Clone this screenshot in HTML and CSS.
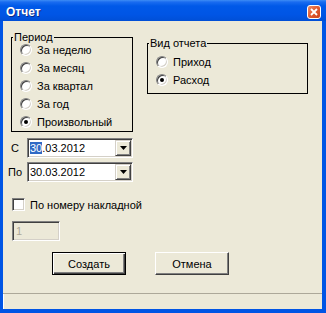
FILE: index.html
```html
<!DOCTYPE html>
<html lang="ru">
<head>
  <meta charset="UTF-8">
  <title>Отчет</title>
  <link rel="stylesheet" href="styles.css">
</head>
<body>
  <div class="window">
    <div class="titlebar">
      <span class="title">Отчет</span>
      <span class="close">
        <svg width="14" height="14" viewBox="0 0 14 14">
          <defs>
            <linearGradient id="red" x1="0" y1="0" x2="1" y2="1">
              <stop offset="0" stop-color="#f0906a"/>
              <stop offset="0.5" stop-color="#e05a30"/>
              <stop offset="1" stop-color="#c8401a"/>
            </linearGradient>
          </defs>
          <rect x="0.5" y="0.5" width="13" height="13" rx="2.5" fill="url(#red)" stroke="#fff"/>
          <path d="M4 4l6 6M10 4l-6 6" stroke="#fff" stroke-width="1.8"/>
        </svg>
      </span>
    </div>

    <div class="client">
      <div class="content">
        <div class="top">
          <fieldset class="group period">
            <legend>Период</legend>
            <label class="opt"><span class="radio"></span>За неделю</label>
            <label class="opt"><span class="radio"></span>За месяц</label>
            <label class="opt"><span class="radio"></span>За квартал</label>
            <label class="opt"><span class="radio"></span>За год</label>
            <label class="opt"><span class="radio on"></span>Произвольный</label>
          </fieldset>

          <fieldset class="group kind">
            <legend>Вид отчета</legend>
            <label class="opt"><span class="radio"></span>Приход</label>
            <label class="opt"><span class="radio on"></span>Расход</label>
          </fieldset>
        </div>

        <div class="dates">
          <div class="date-row">
            <span class="lbl">С</span>
            <div class="combo">
              <span class="value"><span class="sel">30</span>.03.2012</span>
              <span class="drop"><svg width="7" height="4" viewBox="0 0 7 4"><path d="M0 0h7L3.5 4z"/></svg></span>
            </div>
          </div>
          <div class="date-row">
            <span class="lbl">По</span>
            <div class="combo">
              <span class="value">30.03.2012</span>
              <span class="drop"><svg width="7" height="4" viewBox="0 0 7 4"><path d="M0 0h7L3.5 4z"/></svg></span>
            </div>
          </div>
        </div>

        <label class="check-row"><span class="check"></span>По номеру накладной</label>

        <div class="num">1</div>

        <div class="buttons">
          <button class="btn default">Создать</button>
          <button class="btn">Отмена</button>
        </div>
      </div>

      <div class="statusbar"></div>
    </div>
  </div>
</body>
</html>
```

FILE: styles.css
```css
* {
  box-sizing: border-box;
}

body {
  margin: 0;
  font-family: "Liberation Sans", Arial, sans-serif;
  font-size: 11px;
  color: #000;
}

.window {
  width: 326px;
  height: 313px;
  display: flex;
  flex-direction: column;
  background: #0055e5;
}

.titlebar {
  height: 21px;
  flex: none;
  display: flex;
  align-items: center;
  justify-content: space-between;
  padding: 2px 5px 0 6px;
  background: linear-gradient(#3d8df5 0, #1a6cf0 2px, #0059e8 6px, #0055e5 70%, #004fd6 100%);
}

.title {
  color: #fff;
  font-weight: bold;
  font-size: 12px;
  text-shadow: 1px 1px 0 #0b2a8a;
}

.close {
  display: flex;
}

.client {
  flex: 1;
  margin: 0 4px 4px 3px;
  background: #ece9d8;
  display: flex;
  flex-direction: column;
}

.content {
  flex: 1;
}

/* group boxes */
.top {
  display: flex;
  align-items: flex-start;
  padding: 12px 0 0 8px;
}

fieldset {
  margin: 0;
  padding: 0;
  border: 1px solid #000;
  min-width: 0;
}

legend {
  padding: 0 1px;
  margin-left: 1px;
  line-height: 8px;
}

.period {
  width: 122px;
  margin-right: 14px;
}

.kind {
  width: 161px;
  margin-top: 6px;
  padding: 6px 0 4px;
}

.opt {
  display: flex;
  align-items: center;
  gap: 5px;
  height: 18px;
  padding-left: 8px;
}

.radio {
  position: relative;
  flex: none;
  width: 12px;
  height: 12px;
  border-radius: 50%;
  border: 1px solid;
  border-color: #808080 #fff #fff #808080;
  box-shadow: inset 1px 1px 0 #404040, inset -1px -1px 0 #d4d0c8;
  background: #fff;
}

.radio.on::after {
  content: "";
  position: absolute;
  left: 3px;
  top: 3px;
  width: 4px;
  height: 4px;
  border-radius: 50%;
  background: #000;
}

/* date pickers */
.dates {
  display: flex;
  flex-direction: column;
  gap: 4px;
  margin-top: 6px;
}

.date-row {
  display: flex;
  align-items: center;
}

.lbl {
  width: 24px;
  text-align: center;
}

.combo {
  width: 106px;
  height: 20px;
  display: flex;
  align-items: center;
  padding: 1px;
  border: 1px solid;
  border-color: #808080 #fff #fff #808080;
  box-shadow: inset 1px 1px 0 #404040, inset -1px -1px 0 #d4d0c8;
  background: #fff;
}

.value {
  flex: 1;
  padding-left: 1px;
}

.sel {
  background: #316ac5;
  color: #fff;
}

.drop {
  width: 16px;
  height: 16px;
  display: flex;
  align-items: center;
  justify-content: center;
  border: 1px solid;
  border-color: #d4d0c8 #404040 #404040 #d4d0c8;
  box-shadow: inset 1px 1px 0 #fff, inset -1px -1px 0 #808080;
  background: #ece9d8;
}

/* checkbox and number */
.check-row {
  display: flex;
  align-items: center;
  gap: 5px;
  height: 13px;
  margin: 16px 0 0 9px;
}

.check {
  width: 13px;
  height: 13px;
  border: 1px solid;
  border-color: #808080 #fff #fff #808080;
  box-shadow: inset 1px 1px 0 #404040, inset -1px -1px 0 #d4d0c8;
  background: #fff;
}

.num {
  width: 48px;
  height: 20px;
  margin: 10px 0 0 9px;
  padding: 2px 0 0 3px;
  line-height: 14px;
  color: #aca899;
  border: 1px solid;
  border-color: #808080 #fff #fff #808080;
  box-shadow: inset 1px 1px 0 #404040, inset -1px -1px 0 #d4d0c8;
  background: #ece9d8;
}

/* buttons */
.buttons {
  display: flex;
  gap: 29px;
  margin: 11px 0 0 49px;
}

.btn {
  width: 74px;
  height: 23px;
  padding: 0;
  font-family: inherit;
  font-size: 11px;
  color: #000;
  background: #ece9d8;
  border: 1px solid;
  border-color: #fff #404040 #404040 #fff;
  box-shadow: inset -1px -1px 0 #808080;
}

.btn.default {
  border-color: #000;
  box-shadow: inset 1px 1px 0 #fff, inset -1px -1px 0 #404040, inset -2px -2px 0 #808080;
}

.statusbar {
  height: 16px;
  flex: none;
  border-top: 1px solid #aca899;
  box-shadow: inset 1px 0 0 #fff;
}
```
